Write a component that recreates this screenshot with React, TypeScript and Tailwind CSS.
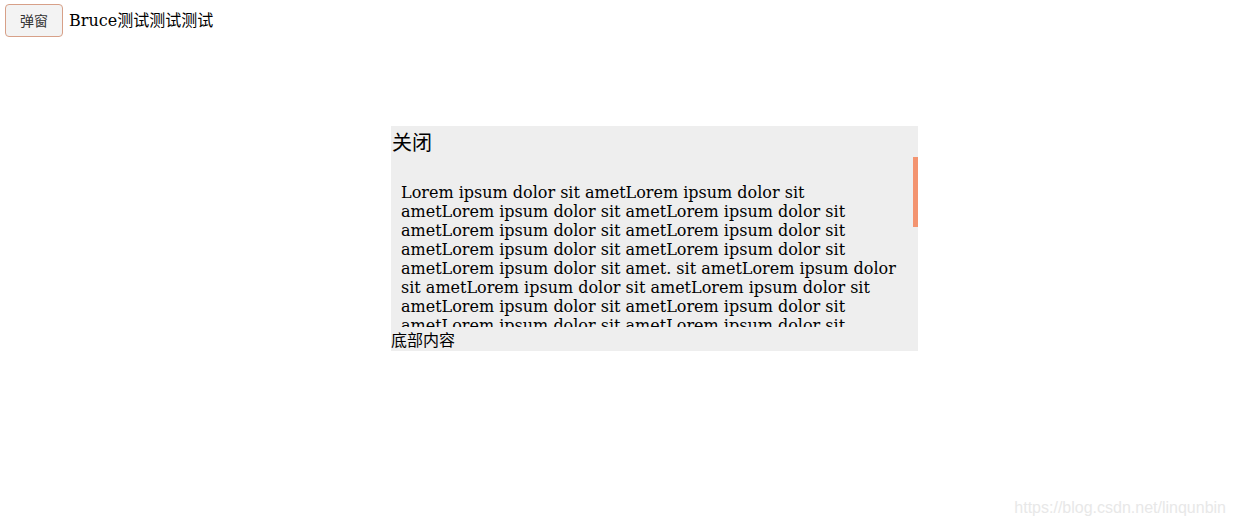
import React from "react";

const unit = "Lorem ipsum dolor sit amet";
const text =
  Array(9).fill(unit).join("") +
  ". sit amet" +
  Array(22).fill(unit).join("");

export default function App() {
  return (
    <div className="relative w-[1235px] h-[524px] bg-white overflow-hidden font-['DejaVu_Serif','Noto_Sans_CJK_SC',serif]">
      <div className="flex items-center h-[39px] pl-[5px] pt-[1px]">
        <button className="w-[58px] h-[33px] rounded-[4px] border border-[#d7a088] bg-[#f3f3f3] text-[14px] text-[#333] flex items-center justify-center font-['Noto_Sans_CJK_SC',sans-serif]">
          弹窗
        </button>
        <span className="ml-[6px] text-[16px] text-black">
          Bruce<span className="font-['Noto_Sans_CJK_SC',sans-serif]">测试测试测试</span>
        </span>
      </div>

      <div className="absolute left-[391px] top-[126px] w-[527px] h-[225px] bg-[#eeeeee] flex flex-col">
        <div className="h-[31px] flex items-center pl-[1px] text-[20px] text-black font-['Noto_Sans_CJK_SC',sans-serif]">
          关闭
        </div>
        <div className="relative h-[170px] overflow-hidden pl-[10px] pr-[20px] py-[10px]">
          <p className="my-[16px] text-[16px] leading-[19px] text-black break-words">{text}</p>
          <div className="absolute right-0 top-0 w-[5px] h-[70px] bg-[#f39470]" />
        </div>
        <div className="h-[24px] flex items-center text-[16px] text-black font-['Noto_Sans_CJK_SC',sans-serif]">
          底部内容
        </div>
      </div>

      <div className="absolute right-[9px] top-[496px] text-[16px] text-[#e8e8e8] font-['Liberation_Sans',Arial,sans-serif]">
        https://blog.csdn.net/linqunbin
      </div>
    </div>
  );
}
